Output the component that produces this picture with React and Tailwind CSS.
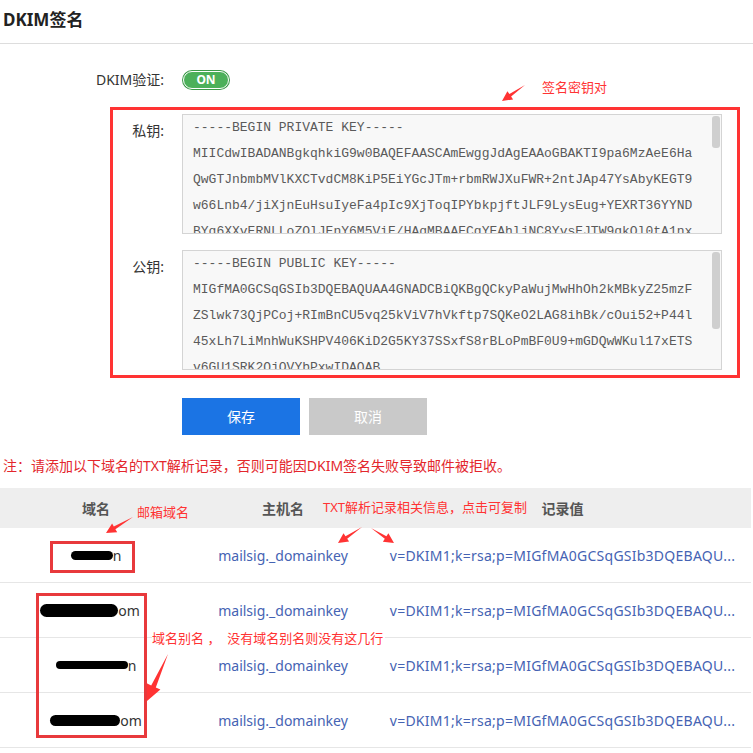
import React from 'react';

const privateLines = [
  '-----BEGIN PRIVATE KEY-----',
  'MIICdwIBADANBgkqhkiG9w0BAQEFAASCAmEwggJdAgEAAoGBAKTI9pa6MzAeE6Ha',
  'QwGTJnbmbMVlKXCTvdCM8KiP5EiYGcJTm+rbmRWJXuFWR+2ntJAp47YsAbyKEGT9',
  'w66Lnb4/jiXjnEuHsuIyeFa4pIc9XjToqIPYbkpjftJLF9LysEug+YEXRT36YYND',
  'BYq6XXvERNLLoZOlJEnY6M5ViE/HAqMBAAECgYEAhljNC8YvsEJTW9qkOl0tA1nx',
];

const publicLines = [
  '-----BEGIN PUBLIC KEY-----',
  'MIGfMA0GCSqGSIb3DQEBAQUAA4GNADCBiQKBgQCkyPaWujMwHhOh2kMBkyZ25mzF',
  'ZSlwk73QjPCoj+RImBnCU5vq25kViV7hVkftp7SQKeO2LAG8ihBk/cOui52+P44l',
  '45xLh7LiMnhWuKSHPV406KiD2G5KY37SSxfS8rBLoPmBF0U9+mGDQwWKul17xETS',
  'v6GU1SRK2QjOVYbPxwIDAQAB',
];

const rows = [
  { blob: 'w-[42px] h-[9px]', tail: 'n', shift: '' },
  { blob: 'w-[78px] h-[13px]', tail: 'om', shift: 'pr-[12px]' },
  { blob: 'w-[72px] h-[8px]', tail: 'n', shift: '' },
  { blob: 'w-[70px] h-[11px]', tail: 'om', shift: '' },
];

// tapered annotation arrow, thin at the tail
function arrowPoints(x1, y1, x2, y2, hl, hw, sw) {
  const dx = x2 - x1;
  const dy = y2 - y1;
  const len = Math.hypot(dx, dy);
  const ux = dx / len;
  const uy = dy / len;
  const nx = -uy;
  const ny = ux;
  const bx = x2 - ux * hl;
  const by = y2 - uy * hl;
  const p = [
    [x1, y1],
    [bx + (nx * sw) / 2, by + (ny * sw) / 2],
    [bx + (nx * hw) / 2, by + (ny * hw) / 2],
    [x2, y2],
    [bx - (nx * hw) / 2, by - (ny * hw) / 2],
    [bx - (nx * sw) / 2, by - (ny * sw) / 2],
  ];
  return p.map(([x, y]) => `${x.toFixed(1)},${y.toFixed(1)}`).join(' ');
}

const KeyBox = ({ label, lines, thumb }) => (
  <div className="flex">
    <div className="w-[51px] mt-[7px] text-right text-[14px] leading-[20px] text-[#333]">{label}</div>
    <div className="ml-[18px] flex h-[120px] w-[540px] border border-[#d4d4d4] bg-[#f8f8f8]">
      <div className="flex-1 overflow-hidden pl-[10px] font-['Liberation_Mono',monospace] text-[13px] leading-[26px] text-[#5a5a5a]">
        {lines.map((l, i) => (
          <div key={i} className="whitespace-pre">{l}</div>
        ))}
      </div>
      <div className="mr-[1px] w-[8px]">
        <div className={`mt-[1px] w-[8px] rounded-[3px] bg-[#cfcfcf] ${thumb}`} />
      </div>
    </div>
  </div>
);

const App = () => {
  return (
    <div className="relative h-[753px] w-[753px] overflow-hidden bg-white font-['Noto_Sans','Noto_Sans_CJK_SC',sans-serif] text-[#333]">
      {/* title */}
      <div className="h-[44px] border-b border-[#dddddd] pl-[3px] pt-[8px] text-[17px] font-bold leading-[24px] text-[#222]">
        DKIM签名
      </div>

      {/* switch */}
      <div className="mt-[26px] flex h-[20px] items-center">
        <div className="w-[164px] text-right text-[14px] leading-[20px]">DKIM验证:</div>
        <div className="ml-[18px] flex h-[20px] w-[48px] rounded-full bg-[#3b9a48] p-[1px]">
          <div className="flex flex-1 items-center justify-center rounded-full border border-white bg-[#4cb05a] text-[12px] font-bold leading-none text-white">
            ON
          </div>
        </div>
      </div>

      {/* key pair */}
      <div className="ml-[110px] mt-[17px] w-[630px] border-[3px] border-[#ff3333] pb-[5px] pt-[4px]">
        <KeyBox label="私钥:" lines={privateLines} thumb="h-[32px]" />
        <div className="mt-[16px]">
          <KeyBox label="公钥:" lines={publicLines} thumb="h-[77px]" />
        </div>
      </div>

      {/* buttons */}
      <div className="ml-[182px] mt-[20px] flex gap-[9px]">
        <div className="flex h-[37px] w-[118px] items-center justify-center bg-[#1b74e4] text-[14px] text-white">保存</div>
        <div className="flex h-[37px] w-[118px] items-center justify-center bg-[#c9c9c9] text-[14px] text-white">取消</div>
      </div>

      <div className="mt-[21px] pl-[3px] text-[14px] leading-[20px] text-[#e3262c]">
        注：请添加以下域名的TXT解析记录，否则可能因DKIM签名失败导致邮件被拒收。
      </div>

      {/* records table */}
      <div className="mt-[12px] w-[751px] text-[14px]">
        <div className="flex h-[40px] items-center bg-[#eeeeee] font-bold text-[#555]">
          <div className="w-[192px] text-center">域名</div>
          <div className="w-[182px] text-center">主机名</div>
          <div className="flex-1 text-center">记录值</div>
        </div>
        {rows.map((r, i) => (
          <div key={i} className="flex h-[55px] items-center border-b border-[#e6e6e6]">
            <div className={`flex w-[192px] items-center justify-center ${r.shift}`}>
              <span className={`inline-block rounded-full bg-black ${r.blob}`} />
              <span className="text-[#333]">{r.tail}</span>
            </div>
            <div className="w-[182px] text-center text-[#4563b3]">mailsig._domainkey</div>
            <div className="flex-1 whitespace-nowrap text-center tracking-[0.25px] text-[#4563b3]">v=DKIM1;k=rsa;p=MIGfMA0GCSqGSIb3DQEBAQU...</div>
          </div>
        ))}
      </div>

      {/* annotations */}
      <div className="absolute left-[542px] top-[79px] text-[13px] leading-[16px] text-[#ff3333]">签名密钥对</div>
      <div className="absolute left-[137px] top-[504px] text-[13px] leading-[16px] text-[#ff3333]">邮箱域名</div>
      <div className="absolute left-[323px] top-[499px] text-[13px] leading-[16px] text-[#ff3333]">TXT解析记录相关信息，点击可复制</div>
      <div className="absolute left-[152px] top-[630px] bg-white pr-[2px] text-[13px] leading-[16px] text-[#ff3333]">
        域名别名 ，&nbsp;&nbsp;没有域名别名则没有这几行
      </div>
      <div className="absolute left-[50px] top-[541px] h-[32px] w-[85px] border-[3px] border-[#e8393c]" />
      <div className="absolute left-[36px] top-[593px] h-[145px] w-[111px] border-[3px] border-[#e8393c]" />

      <svg className="pointer-events-none absolute left-0 top-0" width="753" height="753">
        <g fill="#ff3333">
          <polygon points={arrowPoints(525, 85, 502, 101, 10, 10, 3)} />
          <polygon points={arrowPoints(133, 517, 106, 533, 10, 10, 3)} />
          <polygon points={arrowPoints(362, 527, 338, 543, 10, 10, 3)} />
          <polygon points={arrowPoints(371, 528, 394, 543, 10, 10, 3)} />
          <polygon points={arrowPoints(168, 654, 147, 701, 16, 15, 5)} />
        </g>
      </svg>
    </div>
  );
};

export default App;
